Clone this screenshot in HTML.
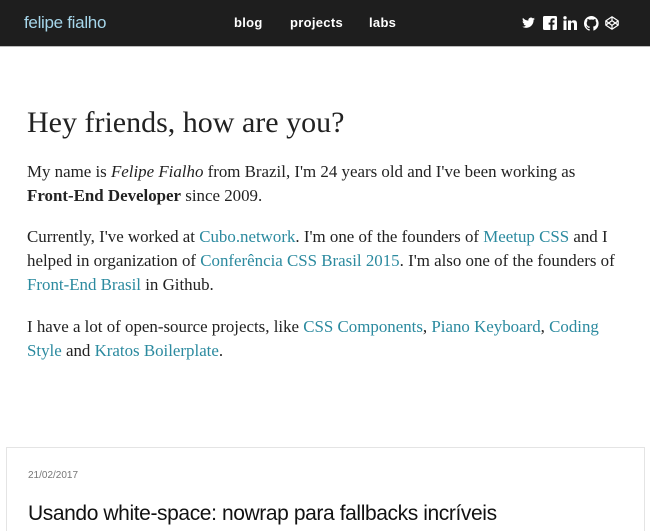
<!DOCTYPE html>
<html><head><meta charset="utf-8"><style>
*{margin:0;padding:0;box-sizing:border-box}
html,body{width:650px;height:531px;overflow:hidden}
body{background:#fff;font-family:"Liberation Serif",serif;color:#222;position:relative}
header{position:absolute;left:0;top:0;width:650px;height:47px;background:#1e1e1e;border-bottom:1px solid #bbb}
.logo{position:absolute;left:24px;top:13px;font:17px "Liberation Sans",sans-serif;color:#a6d6ea;letter-spacing:-.3px}
.nav a{position:absolute;top:15px;font:bold 13px "Liberation Sans",sans-serif;color:#fff;text-decoration:none;letter-spacing:.3px}
.ic{position:absolute;top:16px}
h1{position:absolute;left:27px;top:106px;font-weight:normal;font-size:30px;white-space:nowrap;color:#222}
p{position:absolute;left:27px;font-size:16.9px;line-height:24px;white-space:nowrap;color:#222}
a.l{color:#2b8a9f;text-decoration:none}
.card{position:absolute;left:6px;top:447px;width:639px;height:84px;border:1px solid #e4e4e4;border-bottom:none}
.date{position:absolute;left:21px;top:22px;font:10px "Liberation Sans",sans-serif;color:#777}
.title{position:absolute;left:21px;top:54px;font:21px/24px "Liberation Sans",sans-serif;color:#111;white-space:nowrap;letter-spacing:-.4px}
</style></head><body>
<header>
<div class="logo">felipe fialho</div>
<div class="nav"><a style="left:234px">blog</a><a style="left:290px">projects</a><a style="left:369px">labs</a></div>
<svg class="ic" style="left:521px" width="15" height="14" viewBox="0 0 24 24"><path fill="#fff" d="M23 5a9 9 0 0 1-2.6.7A4.5 4.5 0 0 0 22.4 3a9 9 0 0 1-2.9 1.1A4.5 4.5 0 0 0 11.8 8 12.8 12.8 0 0 1 2.5 3.3a4.5 4.5 0 0 0 1.4 6 4.5 4.5 0 0 1-2-.6 4.5 4.5 0 0 0 3.6 4.5 4.5 4.5 0 0 1-2 .1 4.5 4.5 0 0 0 4.2 3.1A9 9 0 0 1 1 18.3 12.8 12.8 0 0 0 7.9 20.3c8.3 0 12.8-6.9 12.8-12.8v-.6A9 9 0 0 0 23 5z"/></svg>
<svg class="ic" style="left:543px" width="14" height="14" viewBox="0 0 14 14"><rect width="14" height="14" rx="1.5" fill="#fff"/><path fill="#1e1e1e" d="M9.5 14V8.6h1.8l.3-2H9.5V5.3c0-.6.2-1 1-1h1.1V2.5c-.2 0-.8-.1-1.6-.1-1.6 0-2.6 1-2.6 2.7v1.5H5.6v2h1.8V14z"/></svg>
<svg class="ic" style="left:563px" width="14" height="14" viewBox="0 0 14 14"><rect x="0.5" y="4.5" width="3" height="9.5" fill="#fff"/><circle cx="2" cy="1.8" r="1.7" fill="#fff"/><path fill="#fff" d="M5 4.5h3v1.4c.5-.9 1.6-1.6 3-1.6 2.6 0 3 1.7 3 3.9V14h-3V9c0-1.2-.1-2.5-1.6-2.5S8 7.6 8 9v5H5z"/></svg>
<svg class="ic" style="left:584px" width="15" height="15" viewBox="0 0 16 16"><path fill="#fff" d="M8 0a8 8 0 0 0-2.5 15.6c.4 0 .5-.2.5-.4v-1.5c-2.2.5-2.7-1-2.7-1-.4-.9-.9-1.2-.9-1.2-.7-.5.1-.5.1-.5.8.1 1.2.8 1.2.8.7 1.3 1.9.9 2.3.7.1-.5.3-.9.5-1.1-1.8-.2-3.6-.9-3.6-4 0-.9.3-1.6.8-2.1-.1-.2-.4-1 .1-2.1 0 0 .7-.2 2.2.8a7.5 7.5 0 0 1 4 0c1.5-1 2.2-.8 2.2-.8.4 1.1.2 1.9.1 2.1.5.6.8 1.3.8 2.1 0 3.1-1.9 3.7-3.6 3.9.3.3.5.8.5 1.5v2.2c0 .2.1.5.6.4A8 8 0 0 0 8 0z"/></svg>
<svg class="ic" style="left:605px" width="14" height="14" viewBox="0 0 14 14"><g fill="none" stroke="#fff" stroke-width="1.2" stroke-linejoin="round"><path d="M7 .8 13.2 4.9v4.2L7 13.2.8 9.1V4.9z"/><path d="M7 .8v3.8M7 9.4v3.8M.8 4.9 7 9.4l6.2-4.5M.8 9.1 7 4.6l6.2 4.5"/></g></svg>
</header>
<h1>Hey friends, how are you?</h1>
<p style="top:160px">My name is <i>Felipe Fialho</i> from Brazil, I'm 24 years old and I've been working as<br><b>Front-End Developer</b> since 2009.</p>
<p style="top:225px">Currently, I've worked at <a class="l">Cubo.network</a>. I'm one of the founders of <a class="l">Meetup CSS</a> and I<br>helped in organization of <a class="l">Conferência CSS Brasil 2015</a>. I'm also one of the founders of<br><a class="l">Front-End Brasil</a> in Github.</p>
<p style="top:315px">I have a lot of open-source projects, like <a class="l">CSS Components</a>, <a class="l">Piano Keyboard</a>, <a class="l">Coding</a><br><a class="l">Style</a> and <a class="l">Kratos Boilerplate</a>.</p>
<div class="card"><div class="date">21/02/2017</div><div class="title">Usando white-space: nowrap para fallbacks incríveis</div></div>
</body></html>
